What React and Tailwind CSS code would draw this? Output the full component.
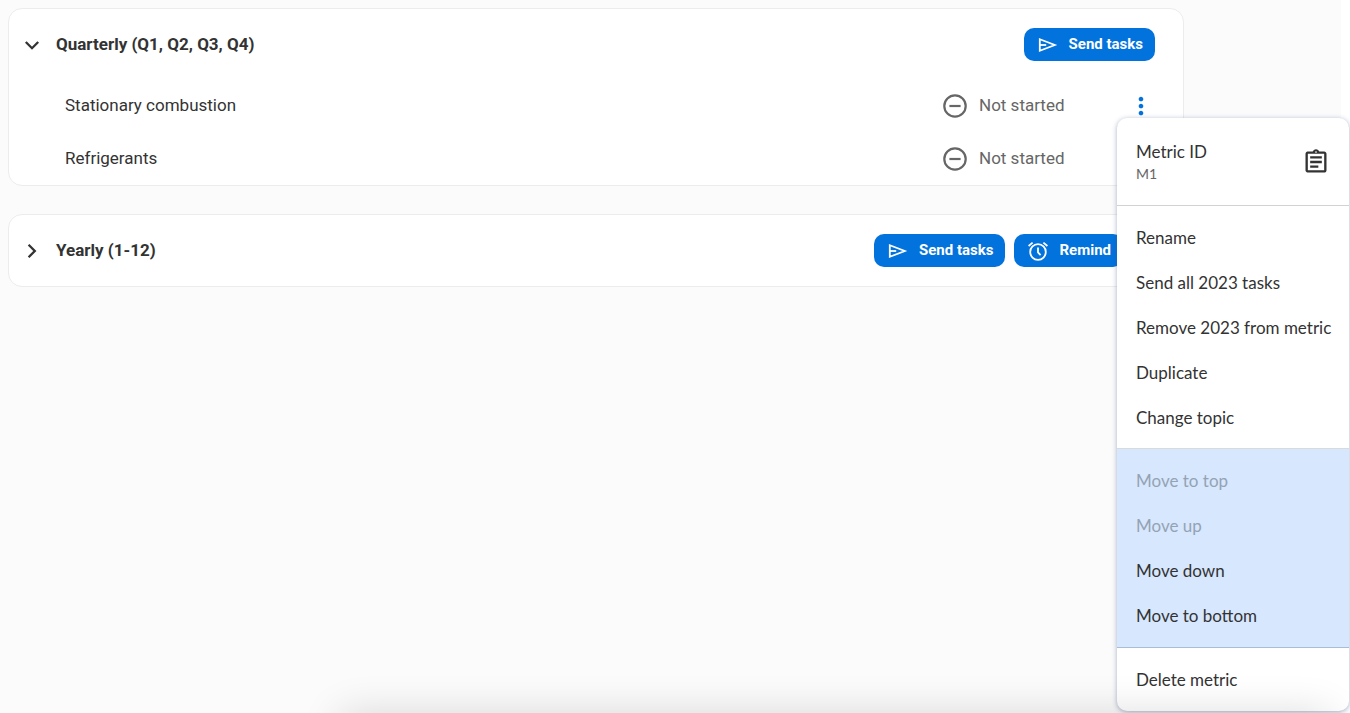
import { MdMoreVert, MdOutlineAssignment } from "react-icons/md";

const SendIcon = () => (
  <svg className="h-6 w-6 shrink-0" viewBox="0 0 24 24" fill="none" stroke="currentColor" strokeWidth="1.8">
    <path d="M3.8 6.2v11.6L18.8 12z" strokeLinejoin="miter" />
    <path d="M3.8 12h6.4" />
  </svg>
);

const AlarmIcon = () => (
  <svg className="h-6 w-6 shrink-0" viewBox="0 0 24 24" fill="none" stroke="currentColor" strokeWidth="1.8">
    <circle cx="12" cy="13" r="7.8" />
    <path d="M12 8.5v4.8l2.6 2.8" />
    <path d="M2.6 7 6.6 3.6M21.4 7l-4-3.4" />
  </svg>
);

const NotStartedIcon = () => (
  <svg className="h-6 w-6 shrink-0" viewBox="0 0 24 24" fill="none" stroke="currentColor" strokeWidth="2.2">
    <circle cx="12" cy="12" r="10.7" />
    <path d="M6.4 12h11.2" />
  </svg>
);

const Chevron = ({ open }) => (
  <svg className="h-6 w-6" viewBox="0 0 24 24" fill="none" stroke="currentColor" strokeWidth="2.3">
    <path d={open ? "M5.8 9l6.2 6.2L18.2 9" : "M8.6 5.8l6.2 6.2-6.2 6.2"} />
  </svg>
);

const ActionButton = ({ icon, children }) => (
  <button
    type="button"
    className="flex h-[33px] items-center gap-[9px] rounded-[10px] bg-[#0272dd] px-3 text-[15px] font-bold whitespace-nowrap text-white"
  >
    {icon}
    {children}
  </button>
);

const MoreButton = ({ label }) => (
  <button type="button" aria-label={label} className="flex w-[23px] justify-center text-[#0272dd]">
    <MdMoreVert className="h-7 w-7 shrink-0" />
  </button>
);

const GroupCard = ({ title, open, actions, children }) => (
  <section className="rounded-[14px] border border-[#ececec] bg-white">
    <header className="flex h-[71px] items-center pr-7 pl-[11px]">
      <button type="button" aria-expanded={open} className="flex items-center gap-3 text-[17px] font-bold">
        <Chevron open={open} />
        {title}
      </button>
      <div className="ml-auto flex items-center gap-[9px]">{actions}</div>
    </header>
    {children}
  </section>
);

const MetricRow = ({ name }) => (
  <li className="flex h-[52px] items-center pr-[31px] pl-14 text-[17px]">
    <span>{name}</span>
    <span className="ml-auto flex items-center gap-3 text-[#666]">
      <NotStartedIcon />
      <span className="w-[150px]">Not started</span>
    </span>
    <MoreButton label={`${name} options`} />
  </li>
);

const MenuItem = ({ children, disabled }) => (
  <button
    type="button"
    role="menuitem"
    disabled={disabled}
    className="flex h-[45px] w-full items-center px-[19px] whitespace-nowrap disabled:text-[#94a3b3]"
  >
    {children}
  </button>
);

const MetricMenu = () => (
  <div
    role="menu"
    className="absolute top-[118px] right-px w-[232px] overflow-hidden rounded-[10px] bg-white font-[Lato,sans-serif] text-[17px] shadow-[0_1px_5px_rgba(60,80,130,0.45)]"
  >
    <div className="flex h-[88px] items-center justify-between border-b border-[#d0d3d6] px-[19px]">
      <div>
        <div className="leading-6">Metric ID</div>
        <div className="text-sm text-[#666]">M1</div>
      </div>
      <button type="button" aria-label="Copy metric ID">
        <MdOutlineAssignment className="h-7 w-7" />
      </button>
    </div>
    <div className="border-b border-[#d8dadc] pt-[9px] pb-2">
      <MenuItem>Rename</MenuItem>
      <MenuItem>Send all 2023 tasks</MenuItem>
      <MenuItem>Remove 2023 from metric</MenuItem>
      <MenuItem>Duplicate</MenuItem>
      <MenuItem>Change topic</MenuItem>
    </div>
    <div className="border-b border-[#aabdd6] bg-[#d6e7fe] py-[9px]">
      <MenuItem disabled>Move to top</MenuItem>
      <MenuItem disabled>Move up</MenuItem>
      <MenuItem>Move down</MenuItem>
      <MenuItem>Move to bottom</MenuItem>
    </div>
    <div className="py-[9px]">
      <MenuItem>Delete metric</MenuItem>
    </div>
  </div>
);

export default function App() {
  return (
    <div className="relative min-h-screen overflow-hidden bg-white pr-[9px] font-[Roboto,sans-serif] text-[#333]">
      <main className="flex min-h-screen flex-col gap-7 bg-[#fbfbfb] pt-2 pr-[157px] pl-2">
        <GroupCard
          title="Quarterly (Q1, Q2, Q3, Q4)"
          open
          actions={<ActionButton icon={<SendIcon />}>Send tasks</ActionButton>}
        >
          <ul className="flex flex-col gap-px">
            <MetricRow name="Stationary combustion" />
            <MetricRow name="Refrigerants" />
          </ul>
        </GroupCard>
        <GroupCard
          title="Yearly (1-12)"
          open={false}
          actions={
            <>
              <ActionButton icon={<SendIcon />}>Send tasks</ActionButton>
              <ActionButton icon={<AlarmIcon />}>Remind</ActionButton>
              <MoreButton label="Yearly options" />
            </>
          }
        />
      </main>
      <MetricMenu />
      <div className="pointer-events-none absolute top-full right-5 left-[340px] h-20 shadow-[0_0_40px_rgba(0,0,0,0.14)]" />
    </div>
  );
}
